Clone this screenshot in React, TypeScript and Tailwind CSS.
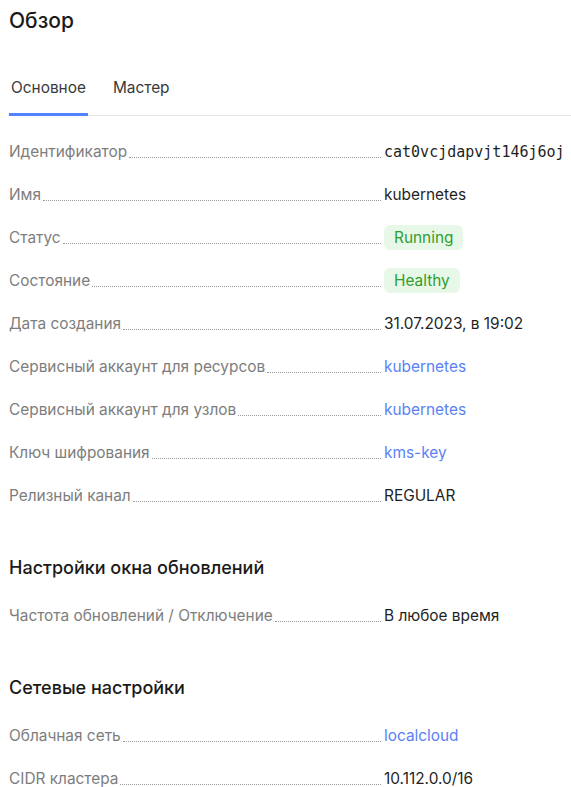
const font = { fontFamily: 'Inter, "Noto Sans", sans-serif' };

type Row = {
  label: string;
  value: string;
  kind?: 'text' | 'mono' | 'link' | 'badge';
};

const mainRows: Row[] = [
  { label: 'Идентификатор', value: 'cat0vcjdapvjt146j6oj', kind: 'mono' },
  { label: 'Имя', value: 'kubernetes' },
  { label: 'Статус', value: 'Running', kind: 'badge' },
  { label: 'Состояние', value: 'Healthy', kind: 'badge' },
  { label: 'Дата создания', value: '31.07.2023, в 19:02' },
  { label: 'Сервисный аккаунт для ресурсов', value: 'kubernetes', kind: 'link' },
  { label: 'Сервисный аккаунт для узлов', value: 'kubernetes', kind: 'link' },
  { label: 'Ключ шифрования', value: 'kms-key', kind: 'link' },
  { label: 'Релизный канал', value: 'REGULAR' },
];

const updateRows: Row[] = [
  { label: 'Частота обновлений / Отключение', value: 'В любое время' },
];

const networkRows: Row[] = [
  { label: 'Облачная сеть', value: 'localcloud', kind: 'link' },
  { label: 'CIDR кластера', value: '10.112.0.0/16' },
];

function Value({ row }: { row: Row }) {
  if (row.kind === 'mono') {
    return (
      <span className="text-[15px] text-[#1f1f1f]" style={{ fontFamily: '"DejaVu Sans Mono", monospace' }}>
        {row.value}
      </span>
    );
  }
  if (row.kind === 'link') {
    return <span className="text-[15.4px] text-[#5a82f5]">{row.value}</span>;
  }
  if (row.kind === 'badge') {
    return (
      <span className="inline-flex h-[25px] items-center rounded-md bg-[#e8f8e8] px-[10px] text-[15.4px] text-[#2f9e2f]">
        {row.value}
      </span>
    );
  }
  return <span className="text-[15.4px] text-[#1f1f1f]">{row.value}</span>;
}

function InfoRow({ row }: { row: Row }) {
  return (
    <div className="flex h-[43px] items-center">
      <div className="flex w-[372px] items-end">
        <span className="text-[15.4px] leading-5 text-[#7d7d7d] whitespace-nowrap">{row.label}</span>
        <span className="mb-[4px] ml-[2px] flex-1 border-b border-dotted border-[#9a9a9a]" />
      </div>
      <div className="ml-[3px]">
        <Value row={row} />
      </div>
    </div>
  );
}

export default function App() {
  return (
    <div className="min-h-screen bg-white pl-[9px]" style={font}>
      <h1 className="pt-[7px] text-[21px] font-medium leading-7 text-[#1a1a1a]">Обзор</h1>

      {/* Табы */}
      <div className="mt-[43px] flex border-b border-[#e5e5e5]">
        <div className="-mb-px border-b-[3px] border-[#5282ff] px-[2px] pb-[14px] text-[15.4px] leading-5 text-[#3a3a3a]">
          Основное
        </div>
        <div className="ml-[25px] pb-[17px] text-[15.4px] leading-5 text-[#3a3a3a]">Мастер</div>
      </div>

      <div className="mt-[14px]">
        {mainRows.map(r => (
          <InfoRow key={r.label} row={r} />
        ))}
      </div>

      <h2 className="mt-[39px] text-[18px] font-medium leading-6 text-[#1a1a1a]">Настройки окна обновлений</h2>
      <div className="mt-[14px]">
        {updateRows.map(r => (
          <InfoRow key={r.label} row={r} />
        ))}
      </div>

      <h2 className="mt-[39px] text-[18px] font-medium leading-6 text-[#1a1a1a]">Сетевые настройки</h2>
      <div className="mt-[14px]">
        {networkRows.map(r => (
          <InfoRow key={r.label} row={r} />
        ))}
      </div>
    </div>
  );
}
